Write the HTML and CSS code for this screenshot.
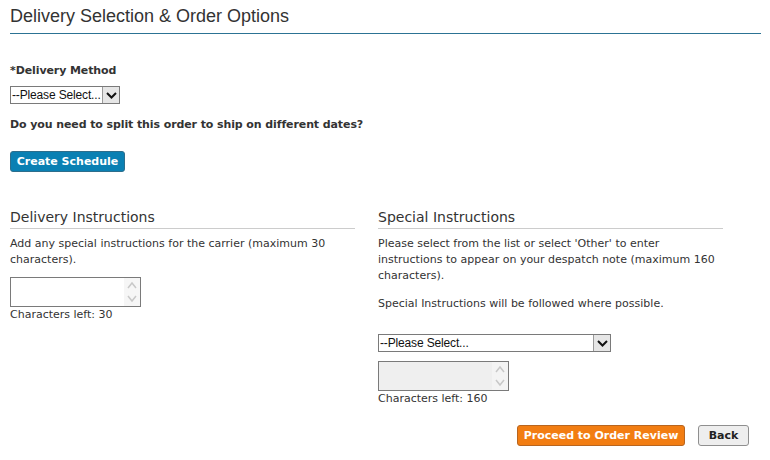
FILE: index.html
```html
<!DOCTYPE html>
<html lang="en">
<head>
<meta charset="utf-8">
<title>Delivery Selection &amp; Order Options</title>
<link rel="stylesheet" href="styles.css">
</head>
<body>
<div class="page">
  <h1 class="title">Delivery Selection &amp; Order Options</h1>

  <div class="label">*Delivery Method</div>
  <div class="select select-small">
    <span class="select-text">--Please Select...</span>
    <span class="select-arrow"><svg width="11" height="7" viewBox="0 0 11 7"><path d="M1 1 L5.5 5.5 L10 1" fill="none" stroke="#111" stroke-width="2"/></svg></span>
  </div>

  <p class="question">Do you need to split this order to ship on different dates?</p>
  <div class="row"><span class="btn btn-blue">Create Schedule</span></div>

  <div class="cols">
    <section class="col">
      <h2 class="sub">Delivery Instructions</h2>
      <p class="text">Add any special instructions for the carrier (maximum 30 characters).</p>
      <div class="area">
        <span class="area-body"></span>
        <span class="area-scroll"><svg width="12" height="28" viewBox="0 0 12 28"><path d="M2 10 L6 5 L10 10" fill="none" stroke="#c8c8c8" stroke-width="1.5"/><path d="M2 18 L6 23 L10 18" fill="none" stroke="#c8c8c8" stroke-width="1.5"/></svg></span>
      </div>
      <div class="count">Characters left: 30</div>
    </section>
    <section class="col">
      <h2 class="sub">Special Instructions</h2>
      <p class="text">Please select from the list or select 'Other' to enter instructions to appear on your despatch note (maximum 160 characters).</p>
      <p class="text text-gap">Special Instructions will be followed where possible.</p>
      <div class="select select-wide">
        <span class="select-text">--Please Select...</span>
        <span class="select-arrow"><svg width="11" height="7" viewBox="0 0 11 7"><path d="M1 1 L5.5 5.5 L10 1" fill="none" stroke="#111" stroke-width="2"/></svg></span>
      </div>
      <div class="area area-disabled">
        <span class="area-body"></span>
        <span class="area-scroll"><svg width="12" height="28" viewBox="0 0 12 28"><path d="M2 10 L6 5 L10 10" fill="none" stroke="#c8c8c8" stroke-width="1.5"/><path d="M2 18 L6 23 L10 18" fill="none" stroke="#c8c8c8" stroke-width="1.5"/></svg></span>
      </div>
      <div class="count">Characters left: 160</div>
    </section>
  </div>

  <div class="actions">
    <span class="btn btn-orange">Proceed to Order Review</span>
    <span class="btn btn-grey">Back</span>
  </div>
</div>
</body>
</html>
```
FILE: styles.css
```css
* { box-sizing: border-box; }
html, body { margin: 0; padding: 0; background: #fff; }
body {
  font-family: "DejaVu Sans", Verdana, sans-serif;
  font-size: 11px;
  line-height: 16px;
  color: #333;
}
.page {
  width: 761px;
  padding-left: 10px;
}
.title {
  margin: 6px 0 0 0;
  padding-bottom: 6px;
  font-family: "Liberation Sans", Arial, sans-serif;
  font-weight: normal;
  font-size: 18px;
  line-height: 21px;
  color: #333;
  border-bottom: 1px solid #2c7394;
}
.label {
  margin-top: 29px;
  font-weight: bold;
  letter-spacing: -0.1px;
}
.select {
  margin-top: 7px;
  display: flex;
  height: 18px;
  border: 1px solid #7a7a7a;
  background: #fff;
  font-family: "Liberation Sans", Arial, sans-serif;
  font-size: 12px;
  line-height: 16px;
  color: #111;
}
.select-small { width: 110px; }
.select-wide { width: 233px; margin-top: 22px; }
.select-text {
  flex: 1;
  min-width: 0;
  padding-left: 1px;
  white-space: nowrap;
  letter-spacing: -0.15px;
}
.select-arrow {
  flex: none;
  width: 17px;
  display: flex;
  align-items: center;
  justify-content: center;
  background: #e6e6e6;
  border-left: 1px solid #9a9a9a;
}
.question {
  margin: 13px 0 0 0;
  font-weight: bold;
  letter-spacing: -0.1px;
}
.row {
  margin-top: 18px;
  display: flex;
}
.btn {
  display: inline-flex;
  align-items: center;
  justify-content: center;
  height: 21px;
  border-radius: 3px;
  font-weight: bold;
  font-size: 11px;
  line-height: 16px;
  white-space: nowrap;
}
.btn-blue {
  width: 115px;
  color: #fff;
  background: #0a80b3;
  border: 1px solid #2d6e8c;
}
.cols {
  margin-top: 36px;
  display: flex;
  gap: 23px;
}
.col { width: 345px; }
.sub {
  margin: 0;
  padding-bottom: 2px;
  font-weight: normal;
  font-size: 14px;
  line-height: 18px;
  color: #333;
  border-bottom: 1px solid #cccccc;
}
.text {
  margin: 7px 0 0 0;
}
.text-gap { margin-top: 12px; }
.area {
  margin-top: 9px;
  display: flex;
  width: 131px;
  height: 30px;
  border: 1px solid #7a7a7a;
  background: #fff;
}
.area-body { flex: 1; }
.area-scroll {
  width: 16px;
  display: flex;
  align-items: center;
  justify-content: center;
  background: #f6f6f6;
}
.area-disabled { background: #efefef; }
.area-disabled .area-scroll { background: #f4f4f4; }
.count { margin-top: 0; }
.actions {
  margin-top: 18px;
  display: flex;
  justify-content: flex-end;
  gap: 13px;
  padding-right: 12px;
}
.btn-orange {
  width: 168px;
  color: #fff;
  background: #f27d12;
  border: 1px solid #b8651f;
}
.btn-grey {
  width: 51px;
  color: #222;
  background: #eeeeee;
  border: 1px solid #8f8f8f;
}
```
